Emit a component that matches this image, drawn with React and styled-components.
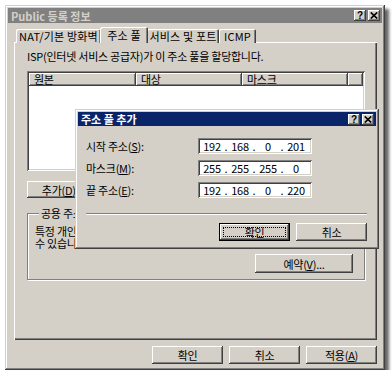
import React from "react";
import styled, { createGlobalStyle, css } from "styled-components";

const GlobalStyle = createGlobalStyle`
  html, body {
    margin: 0;
    padding: 0;
    background: #ffffff;
  }
  body {
    font-family: "Noto Sans CJK KR", "Liberation Sans", sans-serif;
    font-size: 11px;
    letter-spacing: -0.25px;
    color: #000;
  }
`;

// classic 3D edges
const raised = css`
  box-shadow: inset -1px -1px #404040, inset 1px 1px #ffffff,
    inset -2px -2px #808080, inset 2px 2px #d4d0c8;
`;

const sunken = css`
  box-shadow: inset 1px 1px #808080, inset -1px -1px #ffffff,
    inset 2px 2px #404040, inset -2px -2px #d4d0c8;
`;

const Page = styled.div`
  padding: 5px 0 0 5px;
`;

const Window = styled.div`
  position: relative;
  width: 380px;
  height: 365px;
  box-sizing: border-box;
  padding: 3px;
  background: #d4d0c8;
  display: flex;
  flex-direction: column;
  box-shadow: inset -1px -1px #404040, inset 1px 1px #d4d0c8,
    inset -2px -2px #808080, inset 2px 2px #ffffff,
    4px 4px 3px rgba(0, 0, 0, 0.6);
`;

const Dialog = styled.div`
  position: absolute;
  left: 70px;
  top: 104px;
  width: 304px;
  box-sizing: border-box;
  padding: 3px;
  background: #d4d0c8;
  box-shadow: inset -1px -1px #404040, inset 1px 1px #d4d0c8,
    inset -2px -2px #808080, inset 2px 2px #ffffff;
`;

const TitleBar = styled.div`
  height: ${(p) => (p.$active ? 14 : 15)}px;
  display: flex;
  align-items: center;
  justify-content: space-between;
  padding: 0 2px 0 3px;
  background: ${(p) => (p.$active ? "#0a246a" : "#808080")};
  color: ${(p) => (p.$active ? "#ffffff" : "#d4d0c8")};
  font-weight: bold;
  letter-spacing: 0;
`;

const TitleButtons = styled.div`
  display: flex;
  gap: 2px;
`;

const TitleButton = styled.div`
  width: 12px;
  height: 11px;
  display: flex;
  align-items: center;
  justify-content: center;
  background: #d4d0c8;
  color: #000;
  font: bold 10px "Liberation Sans", sans-serif;
  ${raised};
`;

const Content = styled.div`
  padding: 4px 5px 0 6px;
  display: flex;
  flex-direction: column;
`;

const TabStrip = styled.div`
  display: flex;
  align-items: flex-end;
  padding-left: 2px;
  position: relative;
  z-index: 1;
`;

const Tab = styled.div`
  width: ${(p) => p.$width}px;
  height: ${(p) => (p.$selected ? 16 : 14)}px;
  margin: 0 ${(p) => (p.$selected ? -1 : 0)}px -1px;
  display: flex;
  align-items: center;
  justify-content: center;
  letter-spacing: 0.2px;
  background: #d4d0c8;
  border-radius: 2px 2px 0 0;
  position: relative;
  z-index: ${(p) => (p.$selected ? 2 : 0)};
  box-shadow: inset 1px 1px #ffffff, inset -1px 0 #404040, inset -2px 0 #808080;
`;

const Panel = styled.div`
  height: 298px;
  box-sizing: border-box;
  padding: 8px 12px 0 13px;
  display: flex;
  flex-direction: column;
  align-items: flex-start;
  box-shadow: inset 1px 1px #ffffff, inset -1px -1px #404040, inset -2px -2px #808080;
`;

const Desc = styled.div`
  line-height: 13px;
  margin-bottom: 8px;
`;

const ListView = styled.div`
  align-self: stretch;
  height: 100px;
  box-sizing: border-box;
  padding: 2px;
  background: #ffffff;
  ${sunken};
`;

const HeaderRow = styled.div`
  display: flex;
  height: 13px;
`;

const HeaderCell = styled.div`
  width: ${(p) => (p.$width ? `${p.$width}px` : "auto")};
  flex: ${(p) => (p.$width ? "none" : 1)};
  padding-left: 5px;
  box-sizing: border-box;
  line-height: 12px;
  background: #d4d0c8;
  box-shadow: inset -1px -1px #404040, inset 1px 1px #ffffff, inset -2px -2px #808080;
`;

const Button = styled.div`
  width: ${(p) => p.$width || 71}px;
  height: ${(p) => p.$height || 18}px;
  margin-top: ${(p) => p.$top || 0}px;
  display: flex;
  align-items: center;
  justify-content: center;
  box-sizing: border-box;
  background: #d4d0c8;
  ${(p) =>
    p.$default
      ? css`
          box-shadow: inset 0 0 0 1px #000000, inset -2px -2px #404040,
            inset 2px 2px #ffffff, inset -3px -3px #808080;
          outline: 1px dotted #000;
          outline-offset: -5px;
        `
      : raised};
`;

const GroupBox = styled.fieldset`
  align-self: stretch;
  margin: 9px 0 0;
  padding: 0 11px 6px 7px;
  border: 1px solid #808080;
  box-shadow: inset 1px 1px #ffffff, 1px 1px #ffffff;
  display: flex;
  flex-direction: column;
  align-items: flex-end;
`;

const Legend = styled.legend`
  margin-left: 4px;
  padding: 0 2px;
  background: #d4d0c8;
  line-height: 13px;
`;

const GroupText = styled.div`
  align-self: flex-start;
  margin-top: 5px;
  line-height: 12px;
`;

const ButtonRow = styled.div`
  display: flex;
  justify-content: flex-end;
  gap: 6px;
  margin-top: ${(p) => p.$top || 0}px;
`;

const DialogBody = styled.div`
  padding: 12px 9px 5px 8px;
  display: flex;
  flex-direction: column;
  gap: 6px;
`;

const FieldRow = styled.div`
  display: flex;
  align-items: center;
`;

const Label = styled.div`
  width: 112px;
`;

const IpField = styled.div`
  width: 114px;
  height: 16px;
  box-sizing: border-box;
  padding-left: 3px;
  display: flex;
  align-items: center;
  background: #ffffff;
  ${sunken};
`;

const Octet = styled.span`
  width: 22px;
  text-align: center;
`;

const Dot = styled.span`
  width: 6px;
  text-align: center;
`;

const Separator = styled.div`
  height: 0;
  margin-top: 9px;
  border-top: 1px solid #808080;
  border-bottom: 1px solid #ffffff;
`;

const CloseIcon = () => (
  <svg width="8" height="7" viewBox="0 0 8 7">
    <path d="M0.8 0.5 L7.2 6.5 M7.2 0.5 L0.8 6.5" stroke="#000" strokeWidth="1.7" />
  </svg>
);

const TitleControls = () => (
  <TitleButtons>
    <TitleButton>?</TitleButton>
    <TitleButton>
      <CloseIcon />
    </TitleButton>
  </TitleButtons>
);

const IpAddress = ({ value }) => {
  const parts = value.split(".");
  return (
    <IpField>
      {parts.map((p, i) => (
        <React.Fragment key={i}>
          <Octet>{p}</Octet>
          {i < 3 && <Dot>.</Dot>}
        </React.Fragment>
      ))}
    </IpField>
  );
};

const tabs = [
  { label: "NAT/기본 방화벽", width: 85 },
  { label: "주소 풀", width: 48, selected: true },
  { label: "서비스 및 포트", width: 72 },
  { label: "ICMP", width: 37 },
];

const fields = [
  { label: "시작 주소", key: "S", value: "192.168.0.201" },
  { label: "마스크", key: "M", value: "255.255.255.0" },
  { label: "끝 주소", key: "E", value: "192.168.0.220" },
];

export default function App() {
  return (
    <Page>
      <GlobalStyle />
      <Window>
        <TitleBar>
          <span>Public 등록 정보</span>
          <TitleControls />
        </TitleBar>
        <Content>
          <TabStrip>
            {tabs.map((t) => (
              <Tab key={t.label} $width={t.width} $selected={t.selected}>
                {t.label}
              </Tab>
            ))}
          </TabStrip>
          <Panel>
            <Desc>ISP(인터넷 서비스 공급자)가 이 주소 풀을 할당합니다.</Desc>
            <ListView>
              <HeaderRow>
                <HeaderCell $width={107}>원본</HeaderCell>
                <HeaderCell $width={106}>대상</HeaderCell>
                <HeaderCell $width={106}>마스크</HeaderCell>
                <HeaderCell />
              </HeaderRow>
            </ListView>
            <Button $width={72} $height={17} $top={10}>
              추가(<u>D</u>)...
            </Button>
            <GroupBox>
              <Legend>공용 주소 예약</Legend>
              <GroupText>
                특정 개인 컴퓨터용 공용 주소를
                <br />수 있습니다.
              </GroupText>
              <Button $width={98} $height={19} $top={5}>
                예약(<u>V</u>)...
              </Button>
            </GroupBox>
          </Panel>
          <ButtonRow $top={6}>
            <Button>확인</Button>
            <Button>취소</Button>
            <Button>
              적용(<u>A</u>)
            </Button>
          </ButtonRow>
        </Content>

        <Dialog>
          <TitleBar $active>
            <span>주소 풀 추가</span>
            <TitleControls />
          </TitleBar>
          <DialogBody>
            {fields.map((f) => (
              <FieldRow key={f.key}>
                <Label>
                  {f.label}(<u>{f.key}</u>):
                </Label>
                <IpAddress value={f.value} />
              </FieldRow>
            ))}
            <Separator />
            <ButtonRow $top={2}>
              <Button $default>확인</Button>
              <Button>취소</Button>
            </ButtonRow>
          </DialogBody>
        </Dialog>
      </Window>
    </Page>
  );
}
